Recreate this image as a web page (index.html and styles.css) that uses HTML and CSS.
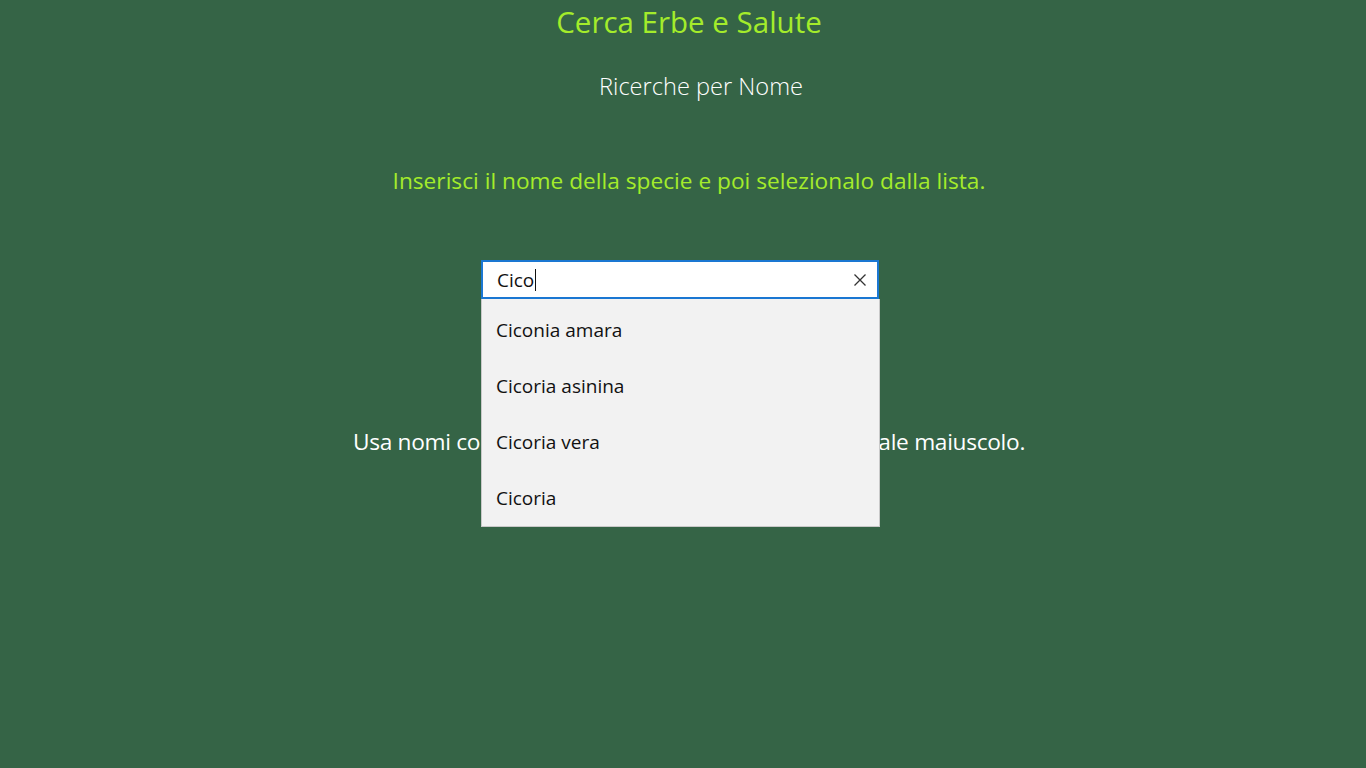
FILE: index.html
```html
<!DOCTYPE html>
<html lang="it">
<head>
  <meta charset="UTF-8">
  <title>Cerca Erbe e Salute</title>
  <link rel="stylesheet" href="styles.css">
</head>
<body>

<div class="page">
  <h1 class="app-title">Cerca Erbe e Salute</h1>
  <h2 class="subtitle">Ricerche per Nome</h2>

  <p class="hint">Inserisci il nome della specie e poi selezionalo dalla lista.</p>

  <div class="search-wrap">
    <div class="search-box">
      <span class="search-text">Cico</span><span class="caret"></span>
      <svg class="clear-btn" width="14" height="14" viewBox="0 0 14 14">
        <path d="M1.5 1.5 L12.5 12.5 M12.5 1.5 L1.5 12.5" stroke="#333" stroke-width="1.3" fill="none"/>
      </svg>
    </div>
    <ul class="suggestions">
      <li>Ciconia amara</li>
      <li>Cicoria asinina</li>
      <li>Cicoria vera</li>
      <li>Cicoria</li>
    </ul>
  </div>

  <p class="note">Usa nomi comuni e scrivi sempre con la lettera iniziale maiuscolo.</p>
</div>

</body>
</html>
```

FILE: styles.css
```css
body { margin: 0; background: #356446; font-family: "Open Sans", "Noto Sans", sans-serif; }
.page { display: flex; flex-direction: column; align-items: center; height: 768px; padding-left: 12px; box-sizing: border-box; }

.app-title { margin: 4px 0 0; font-size: 29.5px; line-height: 36px; font-weight: normal; color: #a4ec2b; }
.subtitle { margin: 30px 0 0; font-size: 23.6px; line-height: 32px; font-weight: 300; color: #fff; padding-left: 24px; }
.hint { margin: 65px 0 0; font-size: 22.7px; line-height: 28px; color: #a4ec2b; }

.search-wrap { position: relative; margin: 65px 18px 0 0; width: 398px; }
.search-box {
  height: 39px; box-sizing: border-box; background: #fff; border: 2px solid #1a77d2;
  display: flex; align-items: center; padding: 0 10px 0 14px;
}
.search-text { font-size: 19px; color: #111; }
.caret { display: inline-block; width: 1px; height: 22px; background: #111; margin-left: 1px; }
.clear-btn { margin-left: auto; }

.suggestions {
  position: absolute; top: 39px; left: 0; width: 399px; box-sizing: border-box;
  margin: 0; padding: 3px 0 0; list-style: none; background: #f2f2f2; border: 1px solid #c9c9c9; border-top: none;
  z-index: 2;
}
.suggestions li { height: 56px; line-height: 56px; padding-left: 14px; font-size: 19px; color: #111; }

.note { margin: 129px 0 0; font-size: 22.7px; line-height: 28px; color: #fff; letter-spacing: -0.3px; }
```
